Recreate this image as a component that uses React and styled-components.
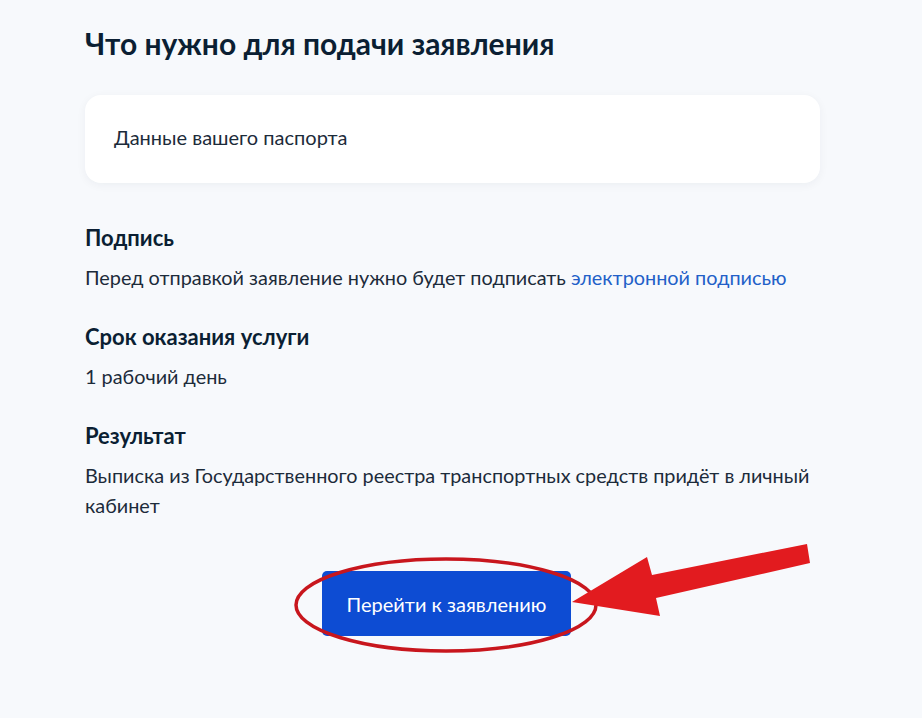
import React from "react";
import styled, { createGlobalStyle } from "styled-components";

const Global = createGlobalStyle`
  html, body { margin: 0; padding: 0; }
  body {
    background: #f7f9fc;
    font-family: Lato, "Noto Sans", sans-serif;
    color: #0b1f33;
  }
`;

const Page = styled.div`
  position: relative;
  width: 922px;
  height: 718px;
  overflow: hidden;
  box-sizing: border-box;
  padding: 25px 102px 0 85px;
`;

const Title = styled.h1`
  margin: 0;
  font-size: 30px;
  line-height: 36px;
  font-weight: 700;
  color: #0b1f33;
`;

const Card = styled.div`
  margin-top: 34px;
  height: 88px;
  background: #ffffff;
  border-radius: 16px;
  box-shadow: 0 2px 10px rgba(11, 31, 51, 0.05);
  display: flex;
  align-items: center;
  padding: 0 29px 4px;
  box-sizing: border-box;
  font-size: 20px;
  color: #1c2b3a;
`;

const Sections = styled.div`
  margin-top: 41px;
  display: flex;
  flex-direction: column;
  gap: 31px;
`;

const Section = styled.section`
  display: flex;
  flex-direction: column;
  gap: 10px;
`;

const SectionTitle = styled.h2`
  margin: 0;
  font-size: 22px;
  line-height: 28px;
  font-weight: 700;
  color: #0b1f33;
`;

const Text = styled.p`
  margin: 0;
  font-size: 19.85px;
  line-height: 30px;
  color: #1c2b3a;
`;

const Link = styled.a`
  color: #2260c8;
  text-decoration: none;
`;

const ButtonRow = styled.div`
  margin-top: 51px;
  display: flex;
  justify-content: center;
  padding-right: 12px;
`;

const Button = styled.button`
  width: 249px;
  height: 65px;
  border: none;
  border-radius: 5px;
  background: #0d4cd3;
  color: #ffffff;
  font-family: Lato, "Noto Sans", sans-serif;
  font-size: 20px;
  cursor: pointer;
`;

const Overlay = styled.svg`
  position: absolute;
  left: 0;
  top: 0;
  pointer-events: none;
`;

export default function App() {
  return (
    <>
      <Global />
      <Page>
        <Title>Что нужно для подачи заявления</Title>
        <Card>Данные вашего паспорта</Card>
        <Sections>
          <Section>
            <SectionTitle>Подпись</SectionTitle>
            <Text>
              Перед отправкой заявление нужно будет подписать{" "}
              <Link href="#">электронной подписью</Link>
            </Text>
          </Section>
          <Section>
            <SectionTitle>Срок оказания услуги</SectionTitle>
            <Text>1 рабочий день</Text>
          </Section>
          <Section>
            <SectionTitle>Результат</SectionTitle>
            <Text>
              Выписка из Государственного реестра транспортных средств придёт в личный кабинет
            </Text>
          </Section>
        </Sections>
        <ButtonRow>
          <Button>Перейти к заявлению</Button>
        </ButtonRow>
        <Overlay width="922" height="718" viewBox="0 0 922 718">
          <ellipse cx="446" cy="605" rx="150" ry="46" fill="none" stroke="#c8161d" strokeWidth="3.5" />
          <polygon
            points="572,602 647,557 652,575 807,544 810,563 656,598 660,616"
            fill="#e21b1f"
          />
        </Overlay>
      </Page>
    </>
  );
}
